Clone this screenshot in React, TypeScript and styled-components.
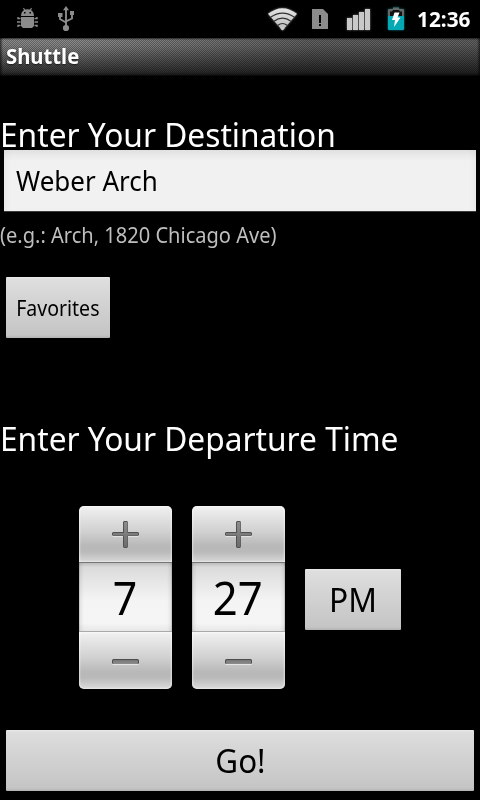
import React, { useState } from 'react';
import styled, { createGlobalStyle, css } from 'styled-components';

const GlobalStyle = createGlobalStyle`
  body { margin: 0; background: #000; overflow: hidden; }
  *, *::before, *::after { box-sizing: border-box; }
  button, input { font: inherit; letter-spacing: inherit; }
`;

const Screen = styled.div`
  width: 480px;
  height: 800px;
  display: flex;
  flex-direction: column;
  background: #000;
  color: #fff;
  font-family: 'Noto Sans', sans-serif;
  overflow: hidden;
`;

/* Text condensed horizontally to the proportions of the Android system face. */
const Condensed = styled.span<{ $scale: number; $origin?: string }>`
  display: inline-block;
  white-space: nowrap;
  transform: scaleX(${p => p.$scale});
  transform-origin: ${p => p.$origin ?? 'left'} center;
`;

const StatusBar = styled.header`
  height: 38px;
  flex: none;
  display: flex;
  align-items: center;
  padding: 0 9px 0 16px;
`;

const IconGroup = styled.div<{ $gap: number; $end?: boolean }>`
  display: flex;
  gap: ${p => p.$gap}px;
  ${p => p.$end && css`margin-left: auto; margin-right: 13px;`}
`;

const Icon = styled.svg`
  display: block;
  flex: none;
  overflow: visible;
`;

const Glow = styled(Icon)`
  filter: drop-shadow(0 0 1px #777);
`;

const CyanGlow = styled(Icon)`
  filter: drop-shadow(0 0 1px #057b82);
`;

const Clock = styled.time`
  width: 54px;
  font-size: 21px;
  line-height: 38px;
  font-weight: 700;
`;

const TitleBar = styled.div`
  height: 38px;
  flex: none;
  padding-left: 6px;
  background:
    repeating-conic-gradient(rgba(0, 0, 0, 0.3) 0 25%, transparent 0 50%) 0 0 / 2px 2px,
    linear-gradient(90deg, rgba(0, 0, 0, 0.6), transparent 3px, transparent 477px, rgba(0, 0, 0, 0.6)),
    linear-gradient(90deg, transparent 15%, rgba(0, 0, 0, 0.3) 65%),
    linear-gradient(#363636 0, #8c8c8c 2px, #888 7px, #343434 34px, #1c1c1c 37px, #000 38px);
`;

const Title = styled.h1`
  margin: 0;
  font-size: 21px;
  line-height: 36px;
  font-weight: 700;
  text-shadow: 0 1px 2px rgba(0, 0, 0, 0.6);
`;

const Form = styled.main`
  flex: 1;
  display: flex;
  flex-direction: column;
  align-items: flex-start;
  padding: 39px 0 9px;
`;

const Heading = styled.h2`
  margin: 0;
  height: 38px;
  font-size: 33px;
  line-height: 40px;
  font-weight: 400;
`;

const Destination = styled.label`
  align-self: stretch;
  height: 62px;
  margin: -3px 4px 0;
  padding: 0 12px;
  background:
    linear-gradient(90deg, rgba(0, 0, 0, 0.03), transparent 8px, transparent 464px, rgba(0, 0, 0, 0.03)),
    linear-gradient(#dfe0df, #e9e9e9 5px, #f1f1f1 11px);
  background-clip: padding-box;
  border-bottom: 1px solid #3b3b3b;
  color: #000;
`;

const DestinationInput = styled.input`
  display: block;
  width: 440px;
  height: 61px;
  padding: 0;
  border: 0;
  outline: 0;
  background: transparent;
  font-size: 27px;
  transform: scaleX(0.962);
  transform-origin: left center;
`;

const Hint = styled.p`
  margin: 9px 0 28px;
  height: 28px;
  font-size: 21px;
  line-height: 28px;
  color: #bebebe;
`;

const Button = styled.button<{ $width: string; $size: number; $line?: number }>`
  width: ${p => p.$width};
  height: 61px;
  flex: none;
  display: flex;
  align-items: flex-start;
  justify-content: center;
  padding: 0;
  border: 0;
  border-radius: 1px;
  font-size: ${p => p.$size}px;
  line-height: ${p => p.$line ?? 61}px;
  color: #000;
  background: linear-gradient(#ececec 0, #dedede 2px, #d7d7d7 16px, #c5c5c5 58px, #b2b2b2 61px);
`;

const PeriodButton = styled(Button)`
  margin-top: 4px;
`;

const FavoritesRow = styled.div`
  display: flex;
  padding: 0 6px;
  margin-bottom: 81px;
`;

const TimeRow = styled.div`
  display: flex;
  align-items: center;
  gap: 20px;
  margin: 49px 0 41px 79px;
  height: 183px;
`;

const Picker = styled.div`
  width: 93px;
  display: flex;
  flex-direction: column;
`;

const Step = styled.button<{ $edge: 'top' | 'bottom' }>`
  height: ${p => (p.$edge === 'top' ? 56 : 57)}px;
  padding: 0;
  border: 0;
  display: flex;
  justify-content: center;
  border-radius: ${p => (p.$edge === 'top' ? '5px 5px 0 0' : '0 0 5px 5px')};
  background: linear-gradient(#f6f6f6 0, #ececec 4px, #d0d0d0 26px, #b8b8b8 40px, #bababa 46px, #d2d2d2 54px, #dedede 100%);
  box-shadow: inset 1px 0 2px rgba(255, 255, 255, 0.5), inset -1px 0 2px rgba(255, 255, 255, 0.5);
`;

const Digits = styled.output`
  height: 70px;
  padding-right: 2px;
  border-top: 1px solid #767676;
  border-bottom: 1px solid #aaa;
  background:
    linear-gradient(90deg, rgba(0, 0, 0, 0.28), rgba(0, 0, 0, 0.07) 1px, transparent 5px, transparent 88px, rgba(0, 0, 0, 0.07) 92px, rgba(0, 0, 0, 0.28)),
    linear-gradient(#bcbcbc, #dadada 4px, #e5e5e5 17px, #f4f4f4 38px, #f5f5f5 60px, #e7e7e7);
  color: #000;
  font-size: 45px;
  line-height: 70px;
  text-align: center;
`;

const GoRow = styled.div`
  align-self: stretch;
  display: flex;
  padding: 0 6px;
`;

const DebugIcon = () => (
  <Icon width="22" height="38" viewBox="16 0 22 38" fill="#8b8b8b">
    <path d="M21 16q0-4 3-6l-1-1.5.8-.7 1.4 1.8q2.3-.7 4.6 0l1.4-1.8.8.7-1 1.5q3 2 3 6zM21 17h13v9l-2 2h-9l-2-2z" />
    <path d="M24 12h1.500v1.500H24zM29.500 12H31v1.500h-1.500z" fill="#000" />
    <path d="M20.500 18.500H18V17M20.500 22H17M20.500 25.500H18V27M34.500 18.500H37V17M34.500 22H38M34.500 25.500H37V27" fill="none" stroke="#8b8b8b" strokeWidth="1.4" />
  </Icon>
);

const UsbIcon = () => (
  <Icon width="17" height="38" viewBox="58 0 17 38" fill="#8b8b8b">
    <path d="M66 6l3 4.300h-6zM58 13h4.500v4H58zM70 11h4v4h-4z" />
    <circle cx="66" cy="28" r="3.1" />
    <path d="M66 9v17M60 16v3l6 3.500M72 14v4.500l-6 2.800" fill="none" stroke="#8b8b8b" strokeWidth="1.9" />
  </Icon>
);

const WifiIcon = () => (
  <Glow width="29" height="38" viewBox="268 0 29 38">
    <defs>
      <linearGradient id="wifi" x1="0" y1="8" x2="0" y2="30" gradientUnits="userSpaceOnUse">
        <stop stopColor="#e4e4e4" />
        <stop offset="1" stopColor="#bdbdbd" />
      </linearGradient>
    </defs>
    <path d="M268 13.800Q282.500 2.500 297 13.800L282.500 30.500z" fill="url(#wifi)" />
    <path d="M270.500 17.300Q282.500 9 294.500 17.300M274 21.200Q282.500 15 291 21.200M277.800 25.300Q282.500 21.800 287.200 25.300" fill="none" stroke="#303030" strokeWidth="1.1" />
    <circle cx="282.5" cy="28.3" r="1.7" fill="#ccc" />
  </Glow>
);

const SimIcon = () => (
  <Icon width="16" height="38" viewBox="312 0 16 38">
    <path d="M312 9h11l5 5v15h-16z" fill="#8b8b8b" />
    <path d="M319 15h2v8h-2zM319 24h2v2h-2z" fill="#000" />
  </Icon>
);

const SignalIcon = () => (
  <Glow width="24" height="38" viewBox="347 0 24 38">
    <path d="M347 18h5v12h-5zM353 15h5v15h-5zM359 12h5v18h-5zM365 9h5v21h-5z" fill="#c9c9c9" />
  </Glow>
);

const BatteryIcon = () => (
  <CyanGlow width="16" height="38" viewBox="388 0 16 38">
    <path d="M388 10q0-1 1-1h4V7.500h6V9h4q1 0 1 1v6h-16z" fill="#686868" />
    <path d="M390 11.500h2l1-1.500h6l1 1.500h2V16h-12z" fill="#111" />
    <path d="M388 16h16v13q0 1-1 1h-14q-1 0-1-1z" fill="#05a9b3" />
    <path d="M394.500 12.500h5l-2 5h3l-6.500 9.500 1-7h-3z" fill="#fff" />
  </CyanGlow>
);

const SimGroup = styled.div`
  display: flex;
  margin-left: -2px;
  margin-right: 2px;
`;

const StepIcon = ({ plus }: { plus?: boolean }) => (
  <Icon width="27" height="57" viewBox="0 0 27 57">
    <defs>
      <linearGradient id={plus ? 'plus' : 'minus'} x1="0" y1="0" x2="0" y2="1">
        <stop stopColor={plus ? '#8c8c8c' : '#777'} />
        <stop offset="1" stopColor={plus ? '#6c6c6c' : '#8c8c8c'} />
      </linearGradient>
    </defs>
    {plus ? (
      <>
        <path d="M12 16h3l1 1v9h10l1 1v3l-1 1H16v10l-1 1h-3l-1-1V31H1l-1-1v-3l1-1h10V17z" fill="#e2e2e2" />
        <path d="M12 15h3l1 1v10h10l1 1v2l-1 1H16v11l-1 1h-3l-1-1V30H1l-1-1v-2l1-1h10V16z" fill="#515151" />
        <path d="M12 16h3.500v11H26v2.500H15.500V41H12V29.500H1V27h11z" fill="url(#plus)" />
      </>
    ) : (
      <>
        <rect x="0" y="28" width="27" height="5" rx="1.5" fill="#e5e5e5" />
        <rect x="0" y="27" width="27" height="5" rx="1.5" fill="#4c4c4c" />
        <rect x="1" y="28" width="25" height="4" rx="1" fill="url(#minus)" />
      </>
    )}
  </Icon>
);

type NumberPickerProps = {
  label: string;
  value: number;
  scale: number;
  onChange: (delta: number) => void;
};

const NumberPicker = ({ label, value, scale, onChange }: NumberPickerProps) => (
  <Picker role="group" aria-label={label}>
    <Step $edge="top" aria-label="Increase" onClick={() => onChange(1)}><StepIcon plus /></Step>
    <Digits><Condensed $scale={scale} $origin="center">{value}</Condensed></Digits>
    <Step $edge="bottom" aria-label="Decrease" onClick={() => onChange(-1)}><StepIcon /></Step>
  </Picker>
);

export default function App() {
  const [hour, setHour] = useState(7);
  const [minute, setMinute] = useState(27);
  const [pm, setPm] = useState(true);

  return (
    <Screen>
      <GlobalStyle />
      <StatusBar>
        <IconGroup $gap={20}><DebugIcon /><UsbIcon /></IconGroup>
        <IconGroup $gap={17} $end>
          <WifiIcon /><SimGroup><SimIcon /></SimGroup><SignalIcon /><BatteryIcon />
        </IconGroup>
        <Clock><Condensed $scale={0.99}>12:36</Condensed></Clock>
      </StatusBar>
      <TitleBar><Title><Condensed $scale={0.965}>Shuttle</Condensed></Title></TitleBar>
      <Form>
        <Heading><Condensed $scale={0.96}>Enter Your Destination</Condensed></Heading>
        <Destination><DestinationInput aria-label="Destination" defaultValue="Weber Arch" /></Destination>
        <Hint><Condensed $scale={0.955}>(e.g.: Arch, 1820 Chicago Ave)</Condensed></Hint>
        <FavoritesRow>
          <Button $width="104px" $size={21} $line={63}><Condensed $scale={0.93} $origin="center">Favorites</Condensed></Button>
        </FavoritesRow>
        <Heading><Condensed $scale={0.96}>Enter Your Departure Time</Condensed></Heading>
        <TimeRow>
          <NumberPicker label="Hour" value={hour} scale={0.95} onChange={d => setHour(h => ((h + d + 11) % 12) + 1)} />
          <NumberPicker label="Minute" value={minute} scale={0.97} onChange={d => setMinute(m => (m + d + 60) % 60)} />
          <PeriodButton $width="96px" $size={33} onClick={() => setPm(!pm)}>
            <Condensed $scale={0.96} $origin="center">{pm ? 'PM' : 'AM'}</Condensed>
          </PeriodButton>
        </TimeRow>
        <GoRow>
          <Button $width="100%" $size={33}><Condensed $scale={0.95} $origin="center">Go!</Condensed></Button>
        </GoRow>
      </Form>
    </Screen>
  );
}
